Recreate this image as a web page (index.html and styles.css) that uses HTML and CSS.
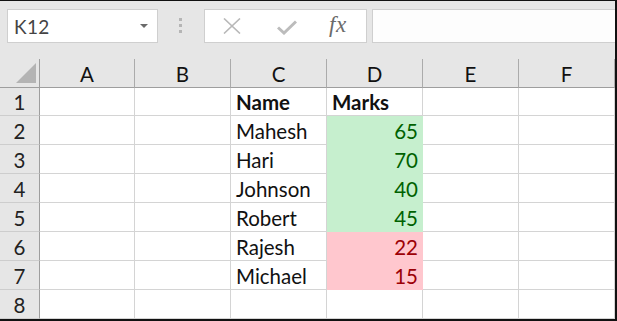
FILE: index.html
```html
<!DOCTYPE html>
<html lang="en">
<head>
    <meta charset="UTF-8">
    <title>Marks</title>
    <link rel="stylesheet" href="styles.css">
</head>
<body>
    <div class="window">
        <div class="toolbar">
            <div class="namebox">
                <span class="ref">K12</span>
                <span class="caret"></span>
            </div>
            <div class="grip"><i></i><i></i><i></i></div>
            <div class="fx-buttons">
                <svg class="icon-cancel" width="18" height="16" viewBox="0 0 18 16">
                    <path d="M1 0.5 L17 15.5 M17 0.5 L1 15.5" stroke="#b8b8b8" stroke-width="1.6" fill="none"/>
                </svg>
                <svg class="icon-enter" width="20" height="15" viewBox="0 0 20 15">
                    <path d="M1 7.5 L7 13 L19 1.5" stroke="#bcbcbc" stroke-width="3" fill="none"/>
                </svg>
                <span class="fx">fx</span>
            </div>
            <div class="formula"></div>
        </div>
        <div class="sheet">
            <div class="corner"><span class="tri"></span></div>
            <div class="col-head">A</div>
            <div class="col-head">B</div>
            <div class="col-head">C</div>
            <div class="col-head">D</div>
            <div class="col-head">E</div>
            <div class="col-head">F</div>

            <div class="row-head">1</div>
            <div class="cell"></div><div class="cell"></div>
            <div class="cell bold">Name</div><div class="cell bold">Marks</div>
            <div class="cell"></div><div class="cell"></div>

            <div class="row-head">2</div>
            <div class="cell"></div><div class="cell"></div>
            <div class="cell">Mahesh</div><div class="cell num pass">65</div>
            <div class="cell"></div><div class="cell"></div>

            <div class="row-head">3</div>
            <div class="cell"></div><div class="cell"></div>
            <div class="cell">Hari</div><div class="cell num pass">70</div>
            <div class="cell"></div><div class="cell"></div>

            <div class="row-head">4</div>
            <div class="cell"></div><div class="cell"></div>
            <div class="cell">Johnson</div><div class="cell num pass">40</div>
            <div class="cell"></div><div class="cell"></div>

            <div class="row-head">5</div>
            <div class="cell"></div><div class="cell"></div>
            <div class="cell">Robert</div><div class="cell num pass">45</div>
            <div class="cell"></div><div class="cell"></div>

            <div class="row-head">6</div>
            <div class="cell"></div><div class="cell"></div>
            <div class="cell">Rajesh</div><div class="cell num fail">22</div>
            <div class="cell"></div><div class="cell"></div>

            <div class="row-head">7</div>
            <div class="cell"></div><div class="cell"></div>
            <div class="cell">Michael</div><div class="cell num fail">15</div>
            <div class="cell"></div><div class="cell"></div>

            <div class="row-head">8</div>
            <div class="cell"></div><div class="cell"></div>
            <div class="cell"></div><div class="cell"></div>
            <div class="cell"></div><div class="cell"></div>
        </div>
    </div>
</body>
</html>
```

FILE: styles.css
```css
* { box-sizing: border-box; }
body {
    margin: 0;
    background: #fff;
    font-family: 'Lato', 'Carlito', 'Liberation Sans', sans-serif;
}
.window {
    width: 617px;
    height: 321px;
    border-top: 1px solid #111;
    border-right: 2px solid #111;
    border-bottom: 2px solid #111;
    background: #e6e6e6;
    overflow: hidden;
}

/* formula bar */
.toolbar {
    display: flex;
    align-items: flex-start;
    height: 58px;
    padding: 8px 0 0 7px;
}
.namebox {
    width: 151px;
    height: 34px;
    background: #fff;
    border: 1px solid #cfcfcf;
    display: flex;
    align-items: center;
    justify-content: space-between;
    padding: 0 9px 0 6px;
}
.ref {
    font-size: 19px;
    color: #444;
    letter-spacing: 0.3px;
}
.caret {
    width: 0;
    height: 0;
    border-left: 4px solid transparent;
    border-right: 4px solid transparent;
    border-top: 4px solid #6a6a6a;
}
.grip {
    display: flex;
    flex-direction: column;
    gap: 3px;
    margin: 9px 22px 0 21px;
}
.grip i {
    display: block;
    width: 3px;
    height: 3px;
    background: #b5b5b5;
}
.fx-buttons {
    width: 163px;
    height: 34px;
    background: #fff;
    border: 1px solid #cfcfcf;
    display: flex;
    align-items: center;
    padding-left: 18px;
}
.icon-cancel { margin-right: 36px; }
.icon-enter { margin-right: 32px; margin-top: 2px; }
.fx {
    font-family: 'Liberation Serif', serif;
    font-style: italic;
    font-size: 23px;
    color: #6a6a6a;
    letter-spacing: 0.5px;
    margin-top: -2px;
}
.formula {
    flex: 1;
    height: 34px;
    margin-left: 5px;
    background: #fdfdfd;
    border: 1px solid #cfcfcf;
    border-right: none;
}

/* grid */
.sheet {
    display: grid;
    grid-template-columns: 40px 95px repeat(5, 96px);
    grid-template-rows: 29px 28px repeat(7, 29px);
    font-size: 20.5px;
    line-height: 24px;
    color: #111;
}
.corner {
    display: flex;
    justify-content: flex-end;
    align-items: flex-end;
    padding: 0 3px 4px 0;
    border-right: 1px solid #9e9e9e;
    border-bottom: 1px solid #9e9e9e;
}
.tri {
    width: 0;
    height: 0;
    border-left: 20px solid transparent;
    border-bottom: 20px solid #b4b4b4;
}
.col-head {
    display: flex;
    align-items: flex-end;
    justify-content: center;
    padding-bottom: 1px;
    border-right: 1px solid #ababab;
    border-bottom: 1px solid #9e9e9e;
}
.row-head {
    display: flex;
    align-items: flex-end;
    justify-content: center;
    padding-bottom: 1px;
    color: #222;
    border-right: 1px solid #9e9e9e;
    border-bottom: 1px solid #cdcdcd;
}
.cell {
    background: #fff;
    display: flex;
    align-items: flex-end;
    padding: 0 4px 1px 5px;
    border-right: 1px solid #d4d4d4;
    border-bottom: 1px solid #d4d4d4;
    white-space: nowrap;
}
.bold { font-weight: 700; }
.num { justify-content: flex-end; }
.pass {
    background: #c6efce;
    color: #006100;
    border-color: #c6efce;
}
.fail {
    background: #ffc7ce;
    color: #9c0006;
    border-color: #ffc7ce;
}
```
